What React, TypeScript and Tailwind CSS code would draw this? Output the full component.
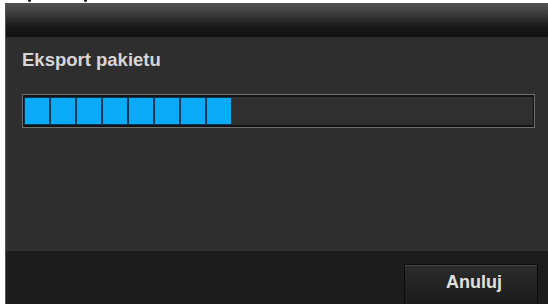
const BLOCKS = 8;

export default function App() {
  return (
    <div className="w-[548px] h-[304px] overflow-hidden bg-white flex flex-col font-['Liberation_Sans',Arial,sans-serif]">
      {/* cut-off caption above the dialog */}
      <div className="h-[3px] relative shrink-0">
        <span className="absolute left-[28px] top-0 w-[3px] h-[2px] rounded-b-full bg-[#222]" />
        <span className="absolute left-[84px] top-0 w-[3px] h-[2px] rounded-b-full bg-[#222]" />
      </div>

      <div className="flex-1 ml-[5px] flex flex-col bg-[#2e2e2e] border-l border-[#555]">
        {/* title bar */}
        <div className="h-[34px] shrink-0 bg-[linear-gradient(to_bottom,#515151_0%,#3e3e3e_30%,#181818_70%,#111111_100%)]" />

        {/* body */}
        <div className="flex-1 flex flex-col pl-[16px] pr-[13px]">
          <div className="mt-[14px] text-[18.5px] leading-none font-bold text-[#d6d6d6]">Eksport pakietu</div>

          <div className="mt-[24px] h-[34px] w-[513px] border border-[#6f6f6f] bg-[#141414] px-[1px] py-[2px]">
            <div className="h-full flex bg-[#2f2f2f]">
              {Array.from({ length: BLOCKS }).map((_, i) => (
                <div key={i} className="w-[26px] h-full bg-[#0aabf6] border border-[#0b3857]" />
              ))}
            </div>
          </div>
        </div>

        {/* footer */}
        <div className="h-[54px] shrink-0 bg-[#1c1c1c] border-t border-[#353535] flex justify-end items-start pt-[13px] pr-[10px]">
          <button className="w-[134px] h-[44px] border border-[#0b0b0b] bg-[linear-gradient(to_bottom,#2c2c2c,#1a1a1a)] shadow-[inset_0_1px_0_#444] flex justify-center pt-[8px] pl-[6px] text-[18px] leading-none font-bold text-[#e0e0e0]">
            Anuluj
          </button>
        </div>
      </div>
    </div>
  );
}
